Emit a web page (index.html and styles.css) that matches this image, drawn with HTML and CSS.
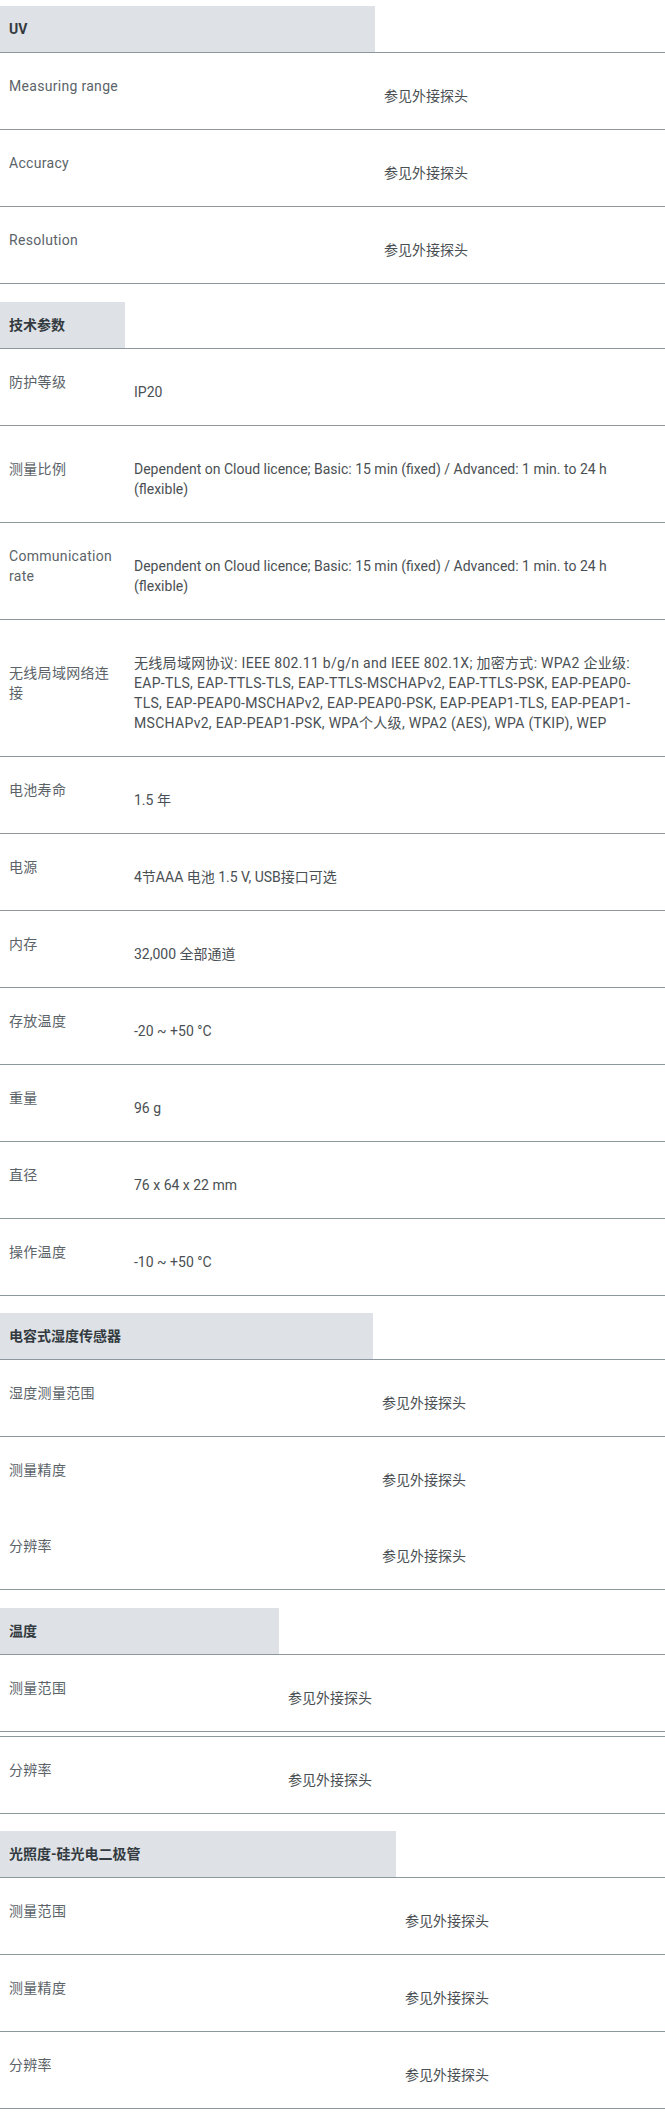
FILE: index.html
```html
<!DOCTYPE html>
<html lang="zh-CN">
<head>
<meta charset="utf-8">
<title>Specifications</title>
<link rel="stylesheet" href="styles.css">
</head>
<body>
<main class="sheet">

  <section class="spec w-uv">
    <div class="spec-head"><h3 class="spec-title">UV</h3></div>
    <div class="spec-row"><div class="spec-label">Measuring range</div><div class="spec-value">参见外接探头</div></div>
    <div class="spec-row"><div class="spec-label">Accuracy</div><div class="spec-value">参见外接探头</div></div>
    <div class="spec-row"><div class="spec-label">Resolution</div><div class="spec-value">参见外接探头</div></div>
  </section>

  <section class="spec w-tech">
    <div class="spec-head"><h3 class="spec-title">技术参数</h3></div>
    <div class="spec-row"><div class="spec-label">防护等级</div><div class="spec-value">IP20</div></div>
    <div class="spec-row"><div class="spec-label">测量比例</div><div class="spec-value">Dependent on Cloud licence; Basic: 15 min (fixed) / Advanced: 1 min. to 24 h (flexible)</div></div>
    <div class="spec-row"><div class="spec-label">Communication rate</div><div class="spec-value">Dependent on Cloud licence; Basic: 15 min (fixed) / Advanced: 1 min. to 24 h (flexible)</div></div>
    <div class="spec-row"><div class="spec-label">无线局域网络连接</div><div class="spec-value spec-value--long">无线局域网协议: IEEE 802.11 b/g/n and IEEE 802.1X; 加密方式: WPA2 企业级:<br>EAP-TLS, EAP-TTLS-TLS, EAP-TTLS-MSCHAPv2, EAP-TTLS-PSK, EAP-PEAP0-<br>TLS, EAP-PEAP0-MSCHAPv2, EAP-PEAP0-PSK, EAP-PEAP1-TLS, EAP-PEAP1-<br>MSCHAPv2, EAP-PEAP1-PSK, WPA个人级, WPA2 (AES), WPA (TKIP), WEP</div></div>
    <div class="spec-row"><div class="spec-label">电池寿命</div><div class="spec-value">1.5 年</div></div>
    <div class="spec-row"><div class="spec-label">电源</div><div class="spec-value">4节AAA 电池 1.5 V, USB接口可选</div></div>
    <div class="spec-row"><div class="spec-label">内存</div><div class="spec-value">32,000 全部通道</div></div>
    <div class="spec-row"><div class="spec-label">存放温度</div><div class="spec-value">-20 ~ +50 °C</div></div>
    <div class="spec-row"><div class="spec-label">重量</div><div class="spec-value">96 g</div></div>
    <div class="spec-row"><div class="spec-label">直径</div><div class="spec-value">76 x 64 x 22 mm</div></div>
    <div class="spec-row"><div class="spec-label">操作温度</div><div class="spec-value">-10 ~ +50 °C</div></div>
  </section>

  <section class="spec w-hum">
    <div class="spec-head"><h3 class="spec-title">电容式湿度传感器</h3></div>
    <div class="spec-row"><div class="spec-label">湿度测量范围</div><div class="spec-value">参见外接探头</div></div>
    <div class="spec-row no-rule"><div class="spec-label">测量精度</div><div class="spec-value">参见外接探头</div></div>
    <div class="spec-row"><div class="spec-label">分辨率</div><div class="spec-value">参见外接探头</div></div>
  </section>

  <section class="spec w-temp">
    <div class="spec-head"><h3 class="spec-title">温度</h3></div>
    <div class="spec-row"><div class="spec-label">测量范围</div><div class="spec-value">参见外接探头</div></div>
    <div class="spec-gap"></div>
    <div class="spec-row"><div class="spec-label">分辨率</div><div class="spec-value">参见外接探头</div></div>
  </section>

  <section class="spec w-light">
    <div class="spec-head"><h3 class="spec-title">光照度-硅光电二极管</h3></div>
    <div class="spec-row"><div class="spec-label">测量范围</div><div class="spec-value">参见外接探头</div></div>
    <div class="spec-row"><div class="spec-label">测量精度</div><div class="spec-value">参见外接探头</div></div>
    <div class="spec-row"><div class="spec-label">分辨率</div><div class="spec-value">参见外接探头</div></div>
  </section>

</main>
</body>
</html>
```

FILE: styles.css
```css
html, body {
  margin: 0;
  padding: 0;
  background: #ffffff;
}

body {
  font-family: Roboto, "Noto Sans CJK SC", sans-serif;
  font-size: 14px;
  line-height: 20px;
  color: #555a5e;
}

.sheet {
  padding-top: 6px;
}

.spec {
  --label-w: 375px;
  display: flex;
  flex-direction: column;
  margin-top: 18px;
}

.spec:first-child {
  margin-top: 0;
}

.w-uv { --label-w: 375px; }
.w-tech { --label-w: 125px; }
.w-hum { --label-w: 373px; margin-top: 17px; }
.w-temp { --label-w: 279px; }
.w-light { --label-w: 396px; margin-top: 17px; }

.spec-head {
  display: flex;
  border-bottom: 1px solid #8c979e;
}

.spec-title {
  width: var(--label-w);
  box-sizing: border-box;
  margin: 0;
  padding: 13px 9px;
  background: #dee2e6;
  font-size: 14px;
  line-height: 20px;
  font-weight: 700;
  color: #333a40;
}

.spec-row {
  display: flex;
  align-items: center;
  padding: 23px 0;
  border-bottom: 1px solid #8c979e;
}

.spec-row.no-rule {
  border-bottom: 0;
}

.spec-gap {
  height: 4px;
  border-bottom: 1px solid #8c979e;
}

.spec-label {
  width: var(--label-w);
  flex: none;
  box-sizing: border-box;
  padding: 0 9px 10px;
  letter-spacing: 0.3px;
  color: #5b6369;
}

.spec-value {
  flex: 1;
  min-width: 0;
  padding: 10px 9px 0;
  color: #4a4f53;
}

.spec-value--long {
  letter-spacing: 0.3px;
}
```
